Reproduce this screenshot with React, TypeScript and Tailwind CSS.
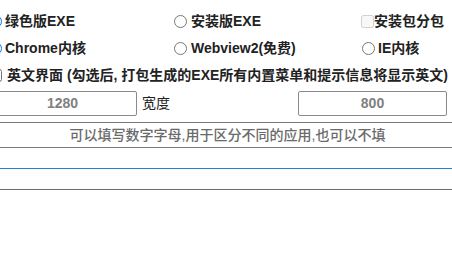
import { FunctionComponent } from "react";

const font = { fontFamily: '"Liberation Sans", "Noto Sans CJK SC", sans-serif' };

type OptProps = {
  type: "radio" | "checkbox";
  label: string;
  checked?: boolean;
  disabled?: boolean;
  gap: string;
};

const Opt: FunctionComponent<OptProps> = ({ type, label, checked, disabled, gap }) => {
  return (
    <label className={`flex items-center ${gap}`}>
      <input
        type={type}
        defaultChecked={checked}
        disabled={disabled}
        className="m-0 w-[13px] h-[13px] shrink-0"
      />
      <span className="whitespace-nowrap">{label}</span>
    </label>
  );
};

const App: FunctionComponent = () => {
  return (
    <div className="w-[452px] h-[254px] overflow-hidden bg-white" style={font}>
      <div className="w-[479px] -ml-3 pt-2 text-[14px] font-bold text-[#222]">
        <div className="flex items-center h-[27px]">
          <div className="w-[186px] shrink-0 pl-[1px]">
            <Opt type="radio" label="绿色版EXE" checked gap="gap-[3px]" />
          </div>
          <div className="w-[187px] shrink-0">
            <Opt type="radio" label="安装版EXE" gap="gap-[4px]" />
          </div>
          <div className="flex-1">
            <Opt type="checkbox" label="安装包分包" disabled gap="gap-0" />
          </div>
        </div>
        <div className="flex items-center h-[27px]">
          <div className="w-[186px] shrink-0 pl-[1px]">
            <Opt type="radio" label="Chrome内核" checked gap="gap-[3px]" />
          </div>
          <div className="w-[187px] shrink-0">
            <Opt type="radio" label="Webview2(免费)" gap="gap-[4px]" />
          </div>
          <div className="flex-1 pl-[1px]">
            <Opt type="radio" label="IE内核" gap="gap-[3px]" />
          </div>
        </div>
        <div className="flex items-center h-[27px] pl-[1px]">
          <Opt
            type="checkbox"
            label="英文界面 (勾选后, 打包生成的EXE所有内置菜单和提示信息将显示英文)"
            gap="gap-[5px]"
          />
        </div>
        <div className="flex items-center mt-[2px] h-[25px]">
          <div className="w-[149px] shrink-0 h-[25px] border border-[#8a8a8a] rounded-[2px] flex items-center justify-center text-[#808080]">
            1280
          </div>
          <span className="ml-[5px] w-[156px] shrink-0 font-normal">宽度</span>
          <div className="w-[149px] shrink-0 h-[25px] border border-[#8a8a8a] rounded-[2px] flex items-center justify-center text-[#808080]">
            800
          </div>
        </div>
        <div className="mt-[6px] h-[26px] border-y border-[#7a7a7a] flex items-center justify-center text-[#6a6a6a] font-medium">
          可以填写数字字母,用于区分不同的应用,也可以不填
        </div>
        <div className="h-[21px] border-b border-[#2f7dc8]"></div>
        <div className="h-[21px] border-b border-[#6e6e6e]"></div>
      </div>
    </div>
  );
};

export default App;
